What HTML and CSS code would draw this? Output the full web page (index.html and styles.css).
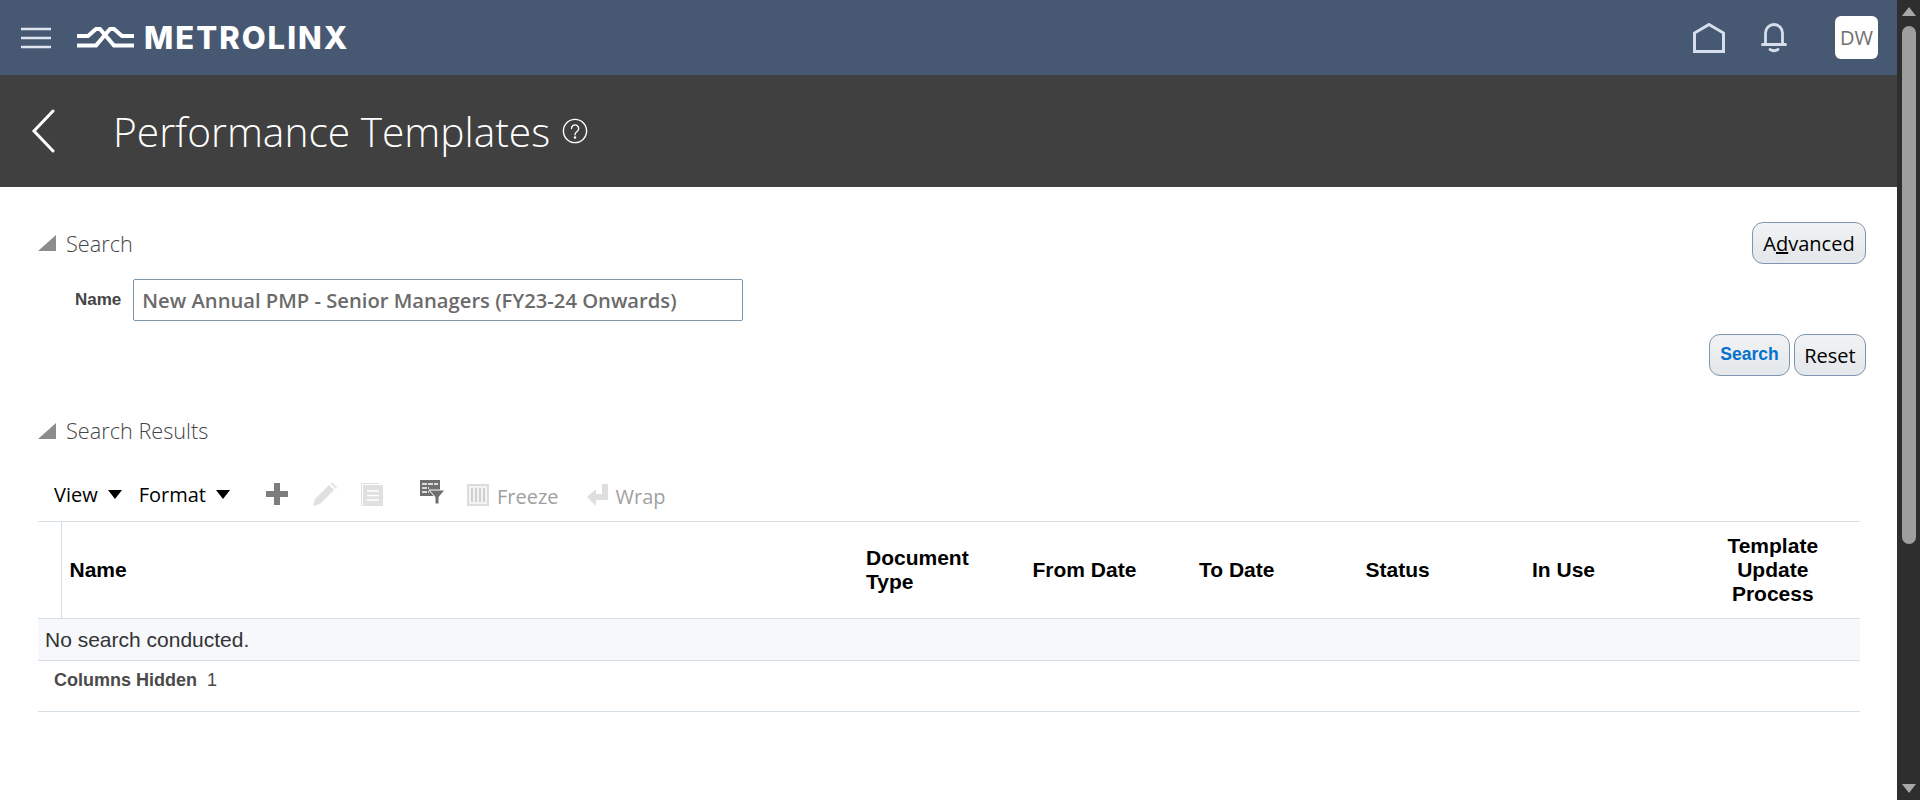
FILE: index.html
```html
<!DOCTYPE html>
<html lang="en">
<head>
    <meta charset="UTF-8">
    <title>Performance Templates</title>
    <link rel="stylesheet" href="styles.css">
</head>
<body>
<div id="page">
    <div id="topbar">
        <svg class="burger" width="30" height="22" viewBox="0 0 30 22"><path d="M0 2h30M0 11h30M0 20h30" stroke="#dfe5ee" stroke-width="2.4"/></svg>
        <svg class="logo-mark" width="57" height="21" viewBox="0 0 57 21" fill="none" stroke="#fff" stroke-width="4">
            <path d="M0 9h11l8-7h4l14 16.500h20"/>
            <path d="M0 18.500h19l14-16.500h4l8 7h12"/>
        </svg>
        <span class="logo-text">METROLINX</span>
        <div class="top-right">
            <svg width="32" height="30" viewBox="0 0 32 30" fill="none" stroke="#d5deea" stroke-width="3"><path d="M1.500 28.500V10L16 1.500 30.500 10v18.500z"/></svg>
            <svg class="bell" width="26" height="30" viewBox="0 0 26 30" fill="none" stroke="#d5deea" stroke-width="2.800"><path d="M4.500 21V10a8.500 8.500 0 0 1 17 0v11"/><path d="M1.500 21.500h23" stroke-width="3" stroke-linecap="round"/><path d="M9 26.500q4 2.500 8 0" stroke-linecap="round"/></svg>
            <div class="avatar">DW</div>
        </div>
    </div>

    <div id="titlebar">
        <svg class="back" width="24" height="44" viewBox="0 0 24 44" fill="none" stroke="#fff" stroke-width="3" stroke-linecap="round"><path d="M22 2L3 22l19 20"/></svg>
        <h1>Performance Templates</h1>
        <svg class="help" width="26" height="26" viewBox="0 0 26 26" fill="none" stroke="#fff" stroke-width="1.400"><circle cx="13" cy="13" r="11.600"/><path d="M9.500 10.500a3.600 3.600 0 1 1 5.600 3c-1.500 1-2.100 1.700-2.100 3.200" stroke-linecap="round"/><circle cx="13" cy="19.500" r=".6"/></svg>
    </div>

    <div id="content">
        <div class="section-head search-head">
            <div class="head-left">
                <span class="disclosure"></span>
                <h2>Search</h2>
            </div>
            <button class="btn adv">A<u>d</u>vanced</button>
        </div>
        <div class="name-row">
            <label for="name">Name</label>
            <input id="name" type="text" value="New Annual PMP - Senior Managers (FY23-24 Onwards)">
        </div>
        <div class="search-btns">
            <button class="btn btn-search">Search</button>
            <button class="btn btn-reset">Reset</button>
        </div>

        <div class="section-head results-head">
            <div class="head-left">
                <span class="disclosure"></span>
                <h2>Search Results</h2>
            </div>
        </div>

        <div class="toolbar">
            <span class="menu">View</span><span class="caret"></span>
            <span class="menu menu-format">Format</span><span class="caret"></span>
            <svg class="ic-add" width="22" height="22" viewBox="0 0 22 22"><path d="M8 0h6v8h8v6h-8v8H8v-8H0V8h8z" fill="#7d7d7d"/></svg>
            <svg class="ic-edit" width="25" height="25" viewBox="0 0 25 25"><path d="M1 24l2-7L17 3l5 5L8 22z" fill="#e0e0e0"/><path d="M18.500 1.500l1.500-1 5 5-1 1.500z" fill="#e0e0e0"/></svg>
            <svg class="ic-doc" width="22" height="23" viewBox="0 0 22 23"><path d="M0 .5h18M.5 0v23" stroke="#e0e0e0" fill="none"/><rect x="2" y="2" width="20" height="21" fill="#e0e0e0"/><path d="M6 8h12M6 12.500h12M6 17h12" stroke="#fff" stroke-width="1.600"/></svg>
            <svg class="ic-filter" width="25" height="24" viewBox="0 0 25 24"><rect width="20" height="16" fill="#6f6f6f"/><path d="M2 4h16M2 8h7M2 12h7" stroke="#fff" stroke-width="1.300" stroke-dasharray="5 1"/><path d="M9 10h16l-6 7v7h-4v-7z" fill="#6f6f6f" stroke="#fff"/></svg>
            <svg class="ic-freeze" width="22" height="22" viewBox="0 0 22 22"><rect x="1" y="1" width="20" height="20" fill="#f3f3f3" stroke="#dcdcdc" stroke-width="2"/><path d="M5 4v14M9 4v14M13 4v14M17 4v14" stroke="#c4c4c4" stroke-width="1.500"/></svg>
            <span class="tool-text">Freeze</span>
            <svg class="ic-wrap" width="21" height="22" viewBox="0 0 21 22"><path d="M15 0h6v16H9v6L0 13l9-8v5h6z" fill="#dedede"/></svg>
            <span class="tool-text">Wrap</span>
        </div>

        <table class="results">
            <colgroup>
                <col class="col-sel"><col class="col-name">
                <col class="col-std"><col class="col-std"><col class="col-std"><col class="col-std"><col class="col-std"><col class="col-last">
            </colgroup>
            <thead>
                <tr>
                    <th class="sel"></th>
                    <th>Name</th>
                    <th>Document Type</th>
                    <th>From Date</th>
                    <th>To Date</th>
                    <th>Status</th>
                    <th>In Use</th>
                    <th class="center">Template Update Process</th>
                </tr>
            </thead>
            <tbody>
                <tr><td colspan="8">No search conducted.</td></tr>
            </tbody>
        </table>
        <div class="table-foot">
            <span class="foot-label">Columns Hidden</span>
            <span class="foot-val">1</span>
        </div>
    </div>
</div>

<div id="scrollbar">
    <span class="arrow-up"></span>
    <div class="thumb"></div>
    <span class="arrow-down"></span>
</div>
</body>
</html>
```

FILE: styles.css
```css
* {
    box-sizing: border-box;
    margin: 0;
    padding: 0;
}
body {
    display: flex;
    height: 100vh;
    overflow: hidden;
    background: white;
    font-family: "Liberation Sans", Arial, sans-serif;
    color: #000;
}
#page {
    flex: 1;
    min-width: 0;
}

/* Top bar */
#topbar {
    height: 75px;
    background: #475873;
    display: flex;
    align-items: center;
    padding: 0 19px 0 21px;
}
.logo-mark {
    margin-left: 26px;
}
.logo-text {
    margin-left: 10px;
    font-family: Inter, sans-serif;
    font-weight: 800;
    font-size: 31px;
    letter-spacing: 2px;
    color: white;
}
.top-right {
    margin-left: auto;
    display: flex;
    align-items: center;
}
.bell {
    margin-left: 36px;
}
.avatar {
    width: 43px;
    height: 43px;
    margin-left: 48px;
    background: white;
    border-radius: 6px;
    display: flex;
    align-items: center;
    justify-content: center;
    font-family: "Open Sans", sans-serif;
    font-size: 20px;
    color: #6f6f6f;
}

/* Title band */
#titlebar {
    height: 112px;
    background: #404040;
    display: flex;
    align-items: center;
    padding-left: 31px;
    color: white;
}
#titlebar h1 {
    margin-left: 58px;
    font-family: "Open Sans", sans-serif;
    font-weight: 300;
    font-size: 40.700px;
}
.help {
    margin-left: 12px;
}

/* Content */
#content {
    padding: 0 31px 0 38px;
}
.section-head {
    display: flex;
    justify-content: space-between;
    align-items: center;
}
.search-head {
    padding-top: 35px;
}
.head-left {
    display: flex;
    align-items: center;
}
.disclosure {
    width: 0;
    height: 0;
    border-left: 18px solid transparent;
    border-bottom: 16px solid #8c8c8c;
    margin-right: 10px;
}
h2 {
    font-family: "Open Sans", sans-serif;
    font-weight: 300;
    font-size: 21.700px;
    color: #444;
}
.btn {
    height: 42px;
    border: 1px solid #7d97b0;
    border-radius: 11px;
    background: linear-gradient(#f1f2f4, #e3e7ea);
    font-family: "Open Sans", sans-serif;
    font-size: 20px;
    color: #000;
}
.adv {
    width: 114px;
}
.name-row {
    display: flex;
    align-items: center;
    margin-top: 15px;
    padding-left: 37px;
}
.name-row label {
    font-weight: bold;
    font-size: 17px;
    color: #444;
    margin-right: 12px;
}
.name-row input {
    width: 610px;
    height: 42px;
    border: 1px solid #7d97a8;
    border-radius: 2px;
    padding: 0 8px;
    font-family: "Open Sans", sans-serif;
    font-weight: 600;
    font-size: 20.200px;
    color: #6b6b6b;
}
.search-btns {
    display: flex;
    justify-content: flex-end;
    gap: 4px;
    margin-top: 13px;
}
.btn-search {
    width: 81px;
    padding-bottom: 2px;
    font-family: "Liberation Sans", sans-serif;
    font-weight: bold;
    font-size: 17.500px;
    color: #0572ce;
}
.btn-reset {
    width: 72px;
}
.results-head {
    margin-top: 40px;
}

/* Toolbar */
.toolbar {
    display: flex;
    align-items: center;
    height: 52px;
    margin-top: 23px;
    padding-left: 16px;
}
.menu {
    font-family: "Open Sans", sans-serif;
    font-size: 20px;
}
.menu-format {
    margin-left: 17px;
}
.caret {
    width: 0;
    height: 0;
    margin-left: 10px;
    border-left: 7px solid transparent;
    border-right: 7px solid transparent;
    border-top: 9px solid #000;
}
.ic-add { margin-left: 36px; }
.ic-edit { margin-left: 24px; }
.ic-doc { margin-left: 24px; }
.ic-filter { margin-left: 37px; margin-top: -4px; }
.ic-freeze { margin-left: 22px; margin-top: 2px; }
.ic-wrap { margin-left: 28px; margin-top: 2px; }
.tool-text {
    margin-left: 8px;
    margin-top: 4px;
    font-family: "Open Sans", sans-serif;
    font-weight: 500;
    font-size: 20px;
    color: #a0a0a0;
}

/* Table */
.results {
    width: calc(100% - 6px);
    border-collapse: collapse;
    table-layout: fixed;
    border-top: 1px solid #d6dfe6;
    margin-top: 1px;
}
.col-sel { width: 23px; }
.col-std { width: 166.500px; }
.col-last { width: 169.500px; }
.results th {
    height: 97px;
    padding: 0 8px;
    text-align: left;
    vertical-align: middle;
    font-size: 21px;
    line-height: 24px;
    font-weight: bold;
    border-bottom: 1px solid #d6dfe6;
}
.results th.sel {
    border-right: 1px solid #d6dfe6;
    padding: 0;
}
.results th.center {
    padding: 0 29px 0 24px;
    text-align: center;
}
.results td {
    height: 42px;
    padding: 0 7px;
    background: #f6f8fc;
    font-size: 21px;
    color: #333;
    border-bottom: 1px solid #d6dfe6;
}
.table-foot {
    width: calc(100% - 6px);
    height: 51px;
    padding: 9px 0 0 16px;
    border-bottom: 1px solid #d6dfe6;
    font-size: 18px;
}
.foot-label {
    font-weight: bold;
    color: #4a4a4a;
}
.foot-val {
    margin-left: 5px;
    color: #4a4a4a;
}

/* Scrollbar */
#scrollbar {
    width: 23px;
    height: 100%;
    background: #2e2e2e;
    display: flex;
    flex-direction: column;
    align-items: center;
}
.arrow-up {
    margin-top: 7px;
    border-left: 7px solid transparent;
    border-right: 7px solid transparent;
    border-bottom: 9px solid #a8a8a8;
}
.thumb {
    width: 14px;
    height: 518px;
    margin-top: 10px;
    background: #9e9e9e;
    border-radius: 7px;
}
.arrow-down {
    margin-top: auto;
    margin-bottom: 7px;
    border-left: 7px solid transparent;
    border-right: 7px solid transparent;
    border-top: 9px solid #a8a8a8;
}
```
